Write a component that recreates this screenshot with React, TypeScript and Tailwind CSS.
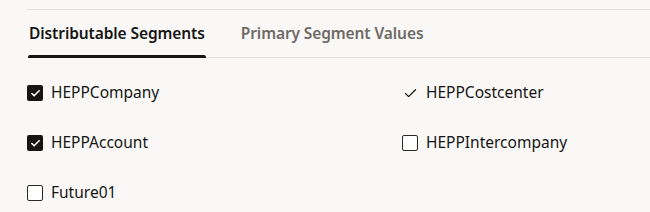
import {Check} from "lucide-react";

type Item = {label: string; state: "checked" | "unchecked" | "readonly"}

const items: Item[] = [
    {label: "HEPPCompany", state: "checked"},
    {label: "HEPPCostcenter", state: "readonly"},
    {label: "HEPPAccount", state: "checked"},
    {label: "HEPPIntercompany", state: "unchecked"},
    {label: "Future01", state: "unchecked"},
]

function Box({state}: {state: Item["state"]}) {
    if (state === "readonly") {
        return (
            <span className="w-[16px] h-[16px] flex items-center justify-center">
                <Check size={15} strokeWidth={2} className="text-[#161513]"/>
            </span>
        )
    }
    if (state === "checked") {
        return (
            <span className="w-[16px] h-[16px] rounded-[2px] bg-[#161513] flex items-center justify-center">
                <Check size={11} strokeWidth={3.5} className="text-white"/>
            </span>
        )
    }
    return <span className="w-[16px] h-[16px] rounded-[2px] border-[1.5px] border-[#2b2926] bg-white"/>
}

export default function App() {
    return (
        <div className="w-[650px] h-[212px] bg-[#f9f8f7] text-[#161513] font-['Noto_Sans',sans-serif] overflow-hidden">
            <div className="ml-[27px] pt-[9px]">
                <div className="border-t border-[#e4e2df]"/>
                <div className="flex gap-[34px] border-b border-[#e4e2df] h-[48px]">
                    <div className="relative px-[2px] flex items-center text-[15.5px] font-semibold tracking-[-0.1px]">
                        Distributable Segments
                        <span className="absolute left-[1px] right-[1px] bottom-[-1px] h-[3px] rounded-t-[2px] bg-[#161513]"/>
                    </div>
                    <div className="flex items-center text-[15.5px] font-semibold text-[#6f6a65] tracking-[-0.1px]">
                        Primary Segment Values
                    </div>
                </div>
                <div className="grid grid-cols-[375px_1fr] gap-y-[28px] pt-[24px]">
                    {items.map(it => (
                        <label key={it.label} className="flex items-center gap-[8px] h-[22px] text-[15.5px]">
                            <Box state={it.state}/>
                            <span>{it.label}</span>
                        </label>
                    ))}
                </div>
            </div>
        </div>
    )
}
